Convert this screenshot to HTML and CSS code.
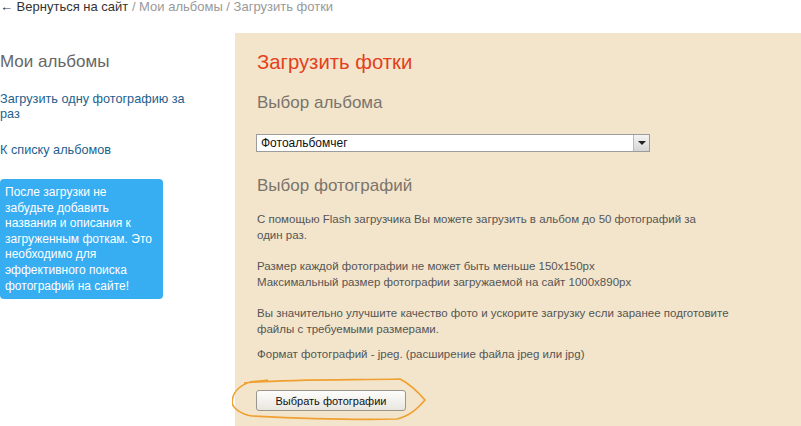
FILE: index.html
```html
<!DOCTYPE html>
<html>
<head>
<meta charset="utf-8">
<title>Загрузить фотки</title>
<link rel="stylesheet" href="styles.css">
</head>
<body>
  <div id="crumbs">
    <a href="#" class="back"><span class="arrow">&larr;</span> Вернуться на сайт</a> / Мои альбомы / Загрузить фотки
  </div>

  <div id="page">
    <div id="sidebar">
      <h2>Мои альбомы</h2>
      <a href="#" class="side-link">Загрузить одну фотографию за раз</a>
      <a href="#" class="side-link">К списку альбомов</a>
      <div class="hint">
        После загрузки не забудьте добавить названия и описания к загруженным фоткам. Это необходимо для эффективного поиска фотографий на сайте!
      </div>
    </div>

    <div id="main-content">
      <h1>Загрузить фотки</h1>
      <h2>Выбор альбома</h2>
      <div class="album-select">
        <span class="value">Фотоальбомчег</span>
        <span class="arrow"></span>
      </div>
      <h2 class="photos-title">Выбор фотографий</h2>
      <p>С помощью Flash загрузчика Вы можете загрузить в альбом до 50 фотографий за<br>один раз.</p>
      <p>Размер каждой фотографии не может быть меньше 150x150px<br>Максимальный размер фотографии загружаемой на сайт 1000x890px</p>
      <p class="tight">Вы значительно улучшите качество фото и ускорите загрузку если заранее подготовите<br>файлы с требуемыми размерами.</p>
      <p>Формат фотографий - jpeg. (расширение файла jpeg или jpg)</p>
      <div class="upload">
        <button id="pick-btn">Выбрать фотографии</button>
        <!-- pen mark around the button -->
        <svg class="loop" width="200" height="50" viewBox="0 0 200 50">
          <path d="M12 7 C50 3 120 4 168 3 C178 8 186 16 193 24 C186 32 178 40 165 43 C120 44 60 42 20 40 C8 38 1 32 0 27 C0 18 6 10 18 6 C24 5 30 5 36 4"
                fill="none" stroke="#f0a030" stroke-width="1.7" stroke-linejoin="round"/>
        </svg>
      </div>
    </div>
  </div>
</body>
</html>
```

FILE: styles.css
```css
body {
  font-family: "Liberation Sans", Arial, sans-serif;
  margin: 0;
  padding: 0;
  background-color: #fff;
  color: #444;
}

#crumbs {
  height: 33px;
  font-size: 13px;
  line-height: 14px;
  color: #999;
}

#crumbs .back {
  color: #333;
  text-decoration: none;
}

#crumbs .arrow {
  display: inline-block;
  width: 13px;
}

#page {
  display: flex;
  min-height: 393px;
}

#sidebar {
  width: 235px;
  flex-shrink: 0;
  padding-top: 19px;
}

#sidebar h2 {
  font-size: 17px;
  font-weight: normal;
  color: #666;
  margin: 0 0 20px 0;
  line-height: 20px;
}

.side-link {
  display: block;
  width: 195px;
  font-size: 12.7px;
  line-height: 15px;
  color: #1d5f8e;
  text-decoration: none;
  margin-bottom: 21px;
}

.hint {
  width: 153px;
  margin-top: 0;
  padding: 6px 5px 5px 5px;
  background-color: #37adf2;
  border-radius: 4px;
  color: #fff;
  font-size: 12px;
  line-height: 15.6px;
}

#main-content {
  flex: 1;
  background-color: #f3e5cb;
  padding: 17px 0 0 21px;
}

#main-content h1 {
  font-size: 20.3px;
  font-weight: normal;
  color: #e4401b;
  margin: 0 0 19px 1px;
  line-height: 24px;
}

#main-content h2 {
  font-size: 17px;
  font-weight: normal;
  color: #7a746b;
  margin: 0 0 21px 1px;
  line-height: 20px;
}

#main-content h2.photos-title {
  margin-bottom: 15px;
}

.album-select {
  display: flex;
  width: 392px;
  height: 16px;
  border: 1px solid #9c9c9c;
  background-color: #fff;
  margin-bottom: 24px;
}

.album-select .value {
  flex: 1;
  font-size: 12px;
  line-height: 16px;
  padding-left: 4px;
  color: #111;
}

.album-select .arrow {
  width: 15px;
  border-left: 1px solid #bbb;
  background: linear-gradient(#f4f4f4, #d6d6d6);
  position: relative;
}

.album-select .arrow::after {
  content: "";
  position: absolute;
  left: 4px;
  top: 6px;
  border-left: 4px solid transparent;
  border-right: 4px solid transparent;
  border-top: 4px solid #222;
}

#main-content p {
  font-size: 11.5px;
  line-height: 16px;
  color: #555;
  margin: 0 0 15px 1px;
}

#main-content p.tight {
  margin-bottom: 9px;
}

.upload {
  position: relative;
  padding-top: 13px;
}

#pick-btn {
  width: 150px;
  height: 21px;
  font-family: "Liberation Sans", Arial, sans-serif;
  font-size: 11px;
  color: #111;
  background: linear-gradient(#fdfdfc, #e9e6df);
  border: 1px solid #9a968d;
  border-radius: 3px;
  padding: 0;
  cursor: pointer;
}

.loop {
  position: absolute;
  left: -24px;
  top: -1px;
}
```
